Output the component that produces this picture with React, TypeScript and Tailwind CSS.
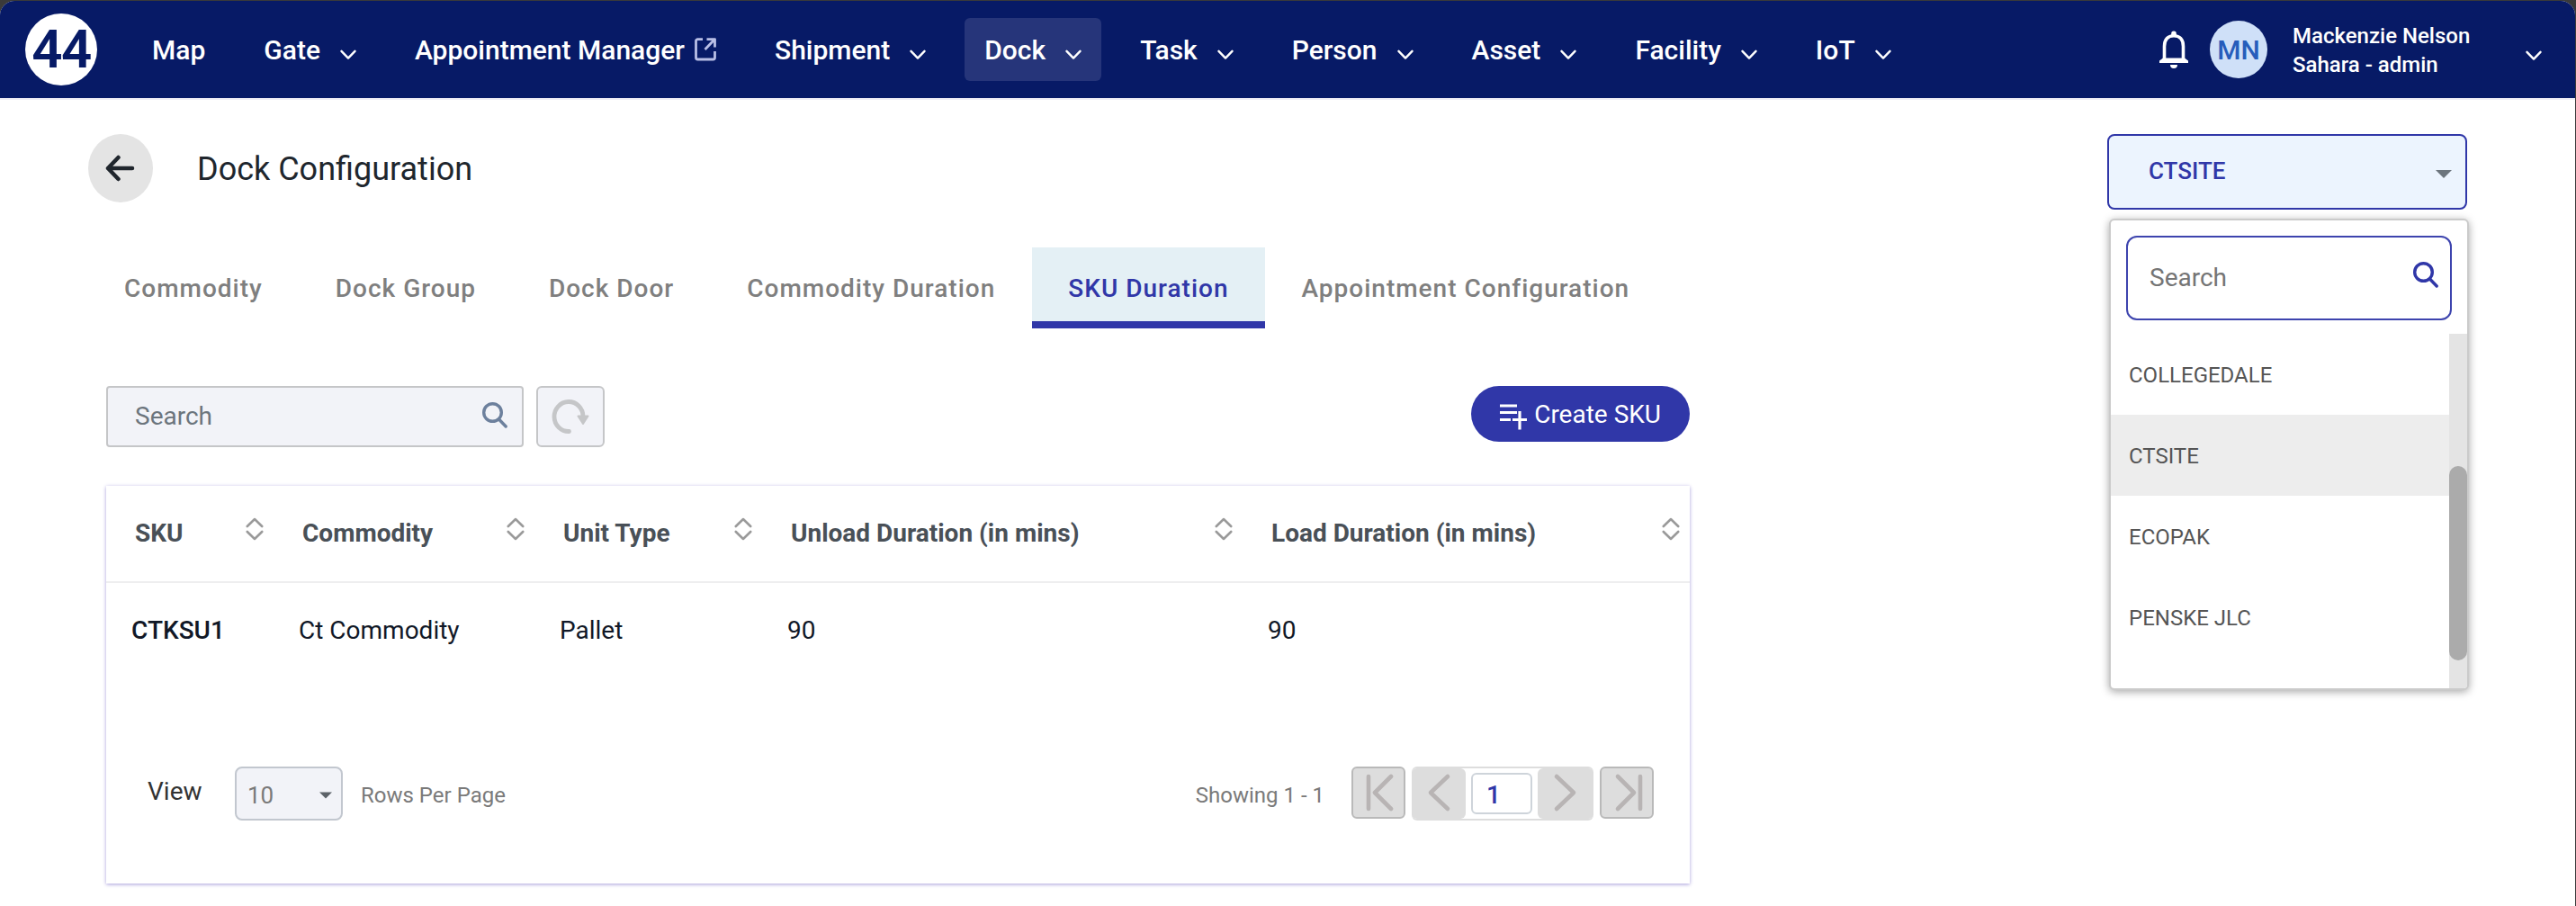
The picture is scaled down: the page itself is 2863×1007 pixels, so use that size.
import React, { useState } from 'react';

interface NavItem {
  label: string;
  menu?: boolean;
  external?: boolean;
}

interface SkuRow {
  sku: string;
  commodity: string;
  unitType: string;
  unload: number;
  load: number;
}

const navItems: NavItem[] = [
  { label: 'Map' },
  { label: 'Gate', menu: true },
  { label: 'Appointment Manager', external: true },
  { label: 'Shipment', menu: true },
  { label: 'Dock', menu: true },
  { label: 'Task', menu: true },
  { label: 'Person', menu: true },
  { label: 'Asset', menu: true },
  { label: 'Facility', menu: true },
  { label: 'IoT', menu: true },
];

const tabs = ['Commodity', 'Dock Group', 'Dock Door', 'Commodity Duration', 'SKU Duration', 'Appointment Configuration'];

const columns = [
  { label: 'SKU', width: 'w-[186px]' },
  { label: 'Commodity', width: 'w-[290px]' },
  { label: 'Unit Type', width: 'w-[253px]' },
  { label: 'Unload Duration (in mins)', width: 'w-[534px]' },
  { label: 'Load Duration (in mins)', width: '' },
];

const rows: SkuRow[] = [{ sku: 'CTKSU1', commodity: 'Ct Commodity', unitType: 'Pallet', unload: 90, load: 90 }];

const sites = ['COLLEGEDALE', 'CTSITE', 'ECOPAK', 'PENSKE JLC'];

const ChevronDown = () => (
  <svg className="mt-[12px] shrink-0" width="18" height="12" viewBox="0 0 18 12" fill="none" stroke="currentColor" strokeWidth="2.4" strokeLinecap="round" strokeLinejoin="round">
    <path d="M1.5 1.8 9 9.6l7.5-7.8" />
  </svg>
);

const ExternalIcon = () => (
  <svg className="ml-[11px] shrink-0" width="24" height="26" viewBox="0 0 24 26" fill="none" stroke="#b9bfe6" strokeWidth="2.8" strokeLinejoin="round">
    <path d="M9 1.600H3.500a2 2 0 0 0-2 2V22a2 2 0 0 0 2 2h17a2 2 0 0 0 2-2v-7" />
    <path d="M13.500 1.600h9v9M22 2 11.500 13" />
  </svg>
);

const SearchIcon = () => (
  <svg className="shrink-0" width="28" height="30" viewBox="0 0 28 30" fill="none" stroke="currentColor" strokeWidth="3.400" strokeLinecap="round">
    <circle cx="11.500" cy="12.500" r="9.800" />
    <path d="m18.500 20 7.700 8" />
  </svg>
);

const SortIcon = () => (
  <svg width="20" height="26" viewBox="0 0 20 26" fill="none" stroke="#9a9a9a" strokeWidth="2.600" strokeLinecap="round" strokeLinejoin="round">
    <path d="M1.800 10 10 2l8.200 8M1.800 16l8.200 8 8.200-8" />
  </svg>
);

const Caret = ({ className }: { className: string }) => (
  <svg className={className} viewBox="0 0 18 9" fill="currentColor">
    <path d="M0 0h18L9 9z" />
  </svg>
);

const PagerIcon = ({ d }: { d: string }) => (
  <svg width="44" height="44" viewBox="0 0 44 44" fill="none" stroke="#b8b4b4" strokeWidth="4.600" strokeLinecap="round" strokeLinejoin="round">
    <path d={d} />
  </svg>
);

const Header = () => (
  <header className="flex h-[110px] items-center rounded-t-[16px] border-b-2 border-[#f0eef6] bg-[#071a66] pl-[28px] pr-[37px] text-white">
    <a href="#" aria-label="Home" className="flex size-[80px] items-center justify-center rounded-full bg-white text-[60px] leading-none font-semibold tracking-tight text-[#071a66]">
      44
    </a>
    <nav className="ml-[39px] flex gap-[21px]">
      {navItems.map(item => (
        <a
          key={item.label}
          href="#"
          className={`flex h-[70px] items-center rounded-[6px] px-[22px] text-[30px] font-medium whitespace-nowrap ${
            item.label === 'Dock' ? 'bg-[#26357a]' : ''
          }`}
        >
          {item.label}
          {item.menu && <span className="ml-[22px] flex"><ChevronDown /></span>}
          {item.external && <ExternalIcon />}
        </a>
      ))}
    </nav>
    <div className="ml-auto flex items-center">
      <button aria-label="Notifications">
        <svg width="32" height="42" viewBox="0 0 32 42" fill="none">
          <path d="M5.500 33V17.500C5.500 10 9.500 5.800 16 5.800S26.500 10 26.500 17.500V33" stroke="#fff" strokeWidth="3.600" />
          <path d="M13.200 6V3.200a2.800 2.800 0 0 1 5.600 0V6zM0 36v-2.500L4 30.500h24l4 3V36zM12 38h8a4 4 0 0 1-8 0z" fill="#fff" />
        </svg>
      </button>
      <span className="ml-[24px] flex size-[64px] items-center justify-center rounded-full bg-[#cfe0f8] text-[30px] font-medium text-[#275dbb]">MN</span>
      <button className="ml-[28px] flex items-center pt-[2px] text-left text-[24px] leading-[32px] font-medium">
        <span className="w-[259px]">
          Mackenzie Nelson
          <br />
          Sahara - admin
        </span>
        <ChevronDown />
      </button>
    </div>
  </header>
);

const SiteSelector = () => {
  const [open, setOpen] = useState<boolean>(true);
  const [site, setSite] = useState<string>('CTSITE');
  const [filter, setFilter] = useState<string>('');

  return (
    <div className="relative w-[400px] shrink-0">
      <button
        aria-haspopup="listbox"
        aria-expanded={open}
        onClick={() => setOpen(!open)}
        className="flex h-[84px] w-full items-center justify-between rounded-[8px] border-2 border-[#3037a8] bg-[#ecf4fe] pr-[15px] pb-[2px] pl-[44px] text-[26px] font-medium text-[#3037a8]"
      >
        {site}
        <Caret className="mt-[6px] h-[9px] w-[18px] text-[#6c757d]" />
      </button>
      {open && (
        <div className="absolute top-[94px] left-[2px] w-full overflow-hidden rounded-[6px] border-2 border-[#cbcbcb] bg-white shadow-[0_2px_10px_rgba(0,0,0,0.35)]">
          <div className="mx-[17px] mt-[17px] flex h-[94px] items-center rounded-[12px] border-2 border-[#3d44ae] pr-[13px] pl-[24px]">
            <input
              aria-label="Search sites"
              placeholder="Search"
              value={filter}
              onChange={e => setFilter(e.target.value)}
              className="w-full min-w-0 text-[28px] outline-none placeholder:text-[#757575]"
            />
            <span className="pb-[8px] text-[#3037a8]"><SearchIcon /></span>
          </div>
          <div className="mt-[15px] flex h-[394px]">
            <ul role="listbox" aria-label="Sites" className="flex-1">
              {sites
                .filter(name => name.includes(filter.toUpperCase()))
                .map(name => (
                  <li
                    key={name}
                    role="option"
                    aria-selected={name === site}
                    onClick={() => setSite(name)}
                    className={`flex h-[90px] items-center pt-[2px] pl-[20px] text-[24px] text-[#555555] ${name === site ? 'bg-[#ededed]' : ''}`}
                  >
                    {name}
                  </li>
                ))}
            </ul>
            <div className="w-[20px] bg-[#e4e4e4] pt-[147px]">
              <div className="h-[216px] rounded-full bg-[#ababab]" />
            </div>
          </div>
        </div>
      )}
    </div>
  );
};

const SkuTable = () => (
  <table className="w-full table-fixed text-left text-[28px]">
    <thead>
      <tr className="h-[107px] border-b-2 border-[#eeeeef] text-[#495057]">
        {columns.map(col => (
          <th key={col.label} className={`pr-[11px] pl-[32px] font-bold ${col.width}`}>
            <div className="flex items-center justify-between whitespace-nowrap">
              {col.label}
              <button aria-label={`Sort by ${col.label}`} className="pb-[10px]">
                <SortIcon />
              </button>
            </div>
          </th>
        ))}
      </tr>
    </thead>
    <tbody>
      {rows.map(row => (
        <tr key={row.sku} className="h-[106px] text-[#111827]">
          <td className="pl-[28px] font-medium">{row.sku}</td>
          <td className="pl-[28px]">{row.commodity}</td>
          <td className="pl-[28px]">{row.unitType}</td>
          <td className="pl-[28px]">{row.unload}</td>
          <td className="pl-[28px]">{row.load}</td>
        </tr>
      ))}
    </tbody>
  </table>
);

const Pagination = () => {
  const [page, setPage] = useState<string>('1');

  return (
    <div className="mt-[99px] flex items-start justify-between pr-[40px] pl-[46px]">
      <div className="flex h-[60px] items-center text-[24px] text-[#7a7a7a]">
        <label htmlFor="page-size" className="w-[97px] pb-[4px] text-[28px] text-[#333333]">View</label>
        <div className="relative">
          <select id="page-size" className="h-[60px] w-[120px] appearance-none rounded-[8px] border-2 border-[#c2c7cf] bg-[#f2f3f8] pt-[4px] pl-[12px] text-[26px]">
            <option>10</option>
          </select>
          <Caret className="pointer-events-none absolute top-[28px] right-[12px] h-[8px] w-[14px] text-[#5c6268]" />
        </div>
        <span className="ml-[20px] pt-[4px]">Rows Per Page</span>
      </div>
      <div className="flex items-start">
        <span className="flex h-[60px] items-center pt-[4px] text-[24px] text-[#7a7a7a]">Showing 1 - 1</span>
        <button aria-label="First page" className="ml-[30px] flex h-[58px] w-[60px] items-center justify-center rounded-[6px] border-2 border-[#b9b9b9] bg-[#dddddd]">
          <PagerIcon d="M11 4v36M36 4 18 22l18 18" />
        </button>
        <div className="ml-[7px] flex h-[60px] w-[202px] items-center justify-between overflow-hidden rounded-[6px] border-y-2 border-[#dddddd] bg-white">
          <button aria-label="Previous page" className="flex h-full w-[60px] items-center justify-center rounded-r-[6px] bg-[#dddddd] pb-[3px]">
            <PagerIcon d="M32 4 13 22l19 18" />
          </button>
          <input
            aria-label="Page"
            value={page}
            onChange={e => setPage(e.target.value)}
            className="h-[46px] w-[68px] rounded-[6px] border-2 border-[#ced4da] pt-[2px] pl-[15px] text-[28px] font-medium text-[#3037a8] outline-none"
          />
          <button aria-label="Next page" className="flex h-full w-[62px] items-center justify-center rounded-l-[6px] bg-[#dddddd] pb-[3px]">
            <PagerIcon d="m12 4 19 18-19 18" />
          </button>
        </div>
        <button aria-label="Last page" className="ml-[7px] flex h-[58px] w-[60px] items-center justify-center rounded-[6px] border-2 border-[#b9b9b9] bg-[#dddddd]">
          <PagerIcon d="M37 4v36M12 4l18 18-18 18" />
        </button>
      </div>
    </div>
  );
};

const App: React.FC = () => {
  const [activeTab, setActiveTab] = useState<string>('SKU Duration');
  const [search, setSearch] = useState<string>('');

  return (
    <div className="flex min-h-screen flex-col bg-[#3a3a3a] pt-px pr-px font-['Roboto',sans-serif]">
      <div className="flex-1 rounded-t-[16px] bg-white">
        <Header />
        <main className="flex items-start justify-between gap-[40px] pt-[38px] pr-[120px] pb-[24px] pl-[98px]">
          <div className="w-full max-w-[1780px]">
            <div className="flex items-center">
              <button aria-label="Back" className="flex h-[76px] w-[72px] items-center justify-center rounded-[50%] bg-[#e4e4e4]">
                <svg width="34" height="30" viewBox="0 0 34 30" fill="none" stroke="#20262d" strokeWidth="4.500" strokeLinecap="round" strokeLinejoin="round">
                  <path d="M14.500 3 3 15l11.500 12M3 15h27" />
                </svg>
              </button>
              <h1 className="ml-[49px] pt-[2px] text-[36px] text-[#20262d]">Dock Configuration</h1>
            </div>

            <div role="tablist" className="mt-[50px] flex gap-px">
              {tabs.map(tab => (
                <button
                  key={tab}
                  role="tab"
                  aria-selected={tab === activeTab}
                  onClick={() => setActiveTab(tab)}
                  className={`h-[90px] border-b-8 px-[40px] pt-[10px] text-[28px] font-medium tracking-[1px] whitespace-nowrap ${
                    tab === activeTab ? 'border-[#3037a8] bg-[#e4f0f5] text-[#3037a8]' : 'border-transparent text-[#7f7f7f]'
                  }`}
                >
                  {tab}
                </button>
              ))}
            </div>

            <div className="pl-[20px]">
              <div className="mt-[64px] flex items-start">
                <div className="flex h-[68px] w-[464px] items-center rounded-[4px] border-2 border-[#c5c6c8] bg-[#f2f3f8] pr-[16px] pl-[30px]">
                  <input
                    aria-label="Search SKU"
                    placeholder="Search"
                    value={search}
                    onChange={e => setSearch(e.target.value)}
                    className="w-full min-w-0 text-[28px] outline-none placeholder:text-[#6c757d]"
                  />
                  <span className="pb-[4px] text-[#6d809d]"><SearchIcon /></span>
                </div>
                <button aria-label="Refresh" className="ml-[14px] flex h-[68px] w-[76px] items-center justify-center rounded-[6px] border-2 border-[#c5c6c8] bg-[#f2f3f8]">
                  <svg width="42" height="40" viewBox="0 0 42 40" fill="none">
                    <path d="M19.500 36.500A16 16.500 0 1 1 35 20" stroke="#c5c6c8" strokeWidth="4.800" strokeLinecap="round" />
                    <path d="M29.500 19.500h11L35 28z" fill="#c5c6c8" stroke="#c5c6c8" strokeWidth="2" strokeLinejoin="round" />
                  </svg>
                </button>
                <button className="ml-auto flex h-[62px] items-center gap-[8px] rounded-full bg-[#3037a8] px-[32px] pt-[2px] text-[28px] text-white">
                  <svg className="mt-[4px]" width="30" height="30" viewBox="0 0 30 30" stroke="#fff" strokeWidth="3.200">
                    <path d="M0 3h19M0 10.500h19M0 18.500h12M14 18.500h16M22 9V29.500" />
                  </svg>
                  Create SKU
                </button>
              </div>

              <div className="mt-[43px] bg-white pb-[70px] shadow-[0_1px_4px_#a79edb]">
                <SkuTable />
                <Pagination />
              </div>
            </div>
          </div>
          <SiteSelector />
        </main>
      </div>
    </div>
  );
};

export default App;
